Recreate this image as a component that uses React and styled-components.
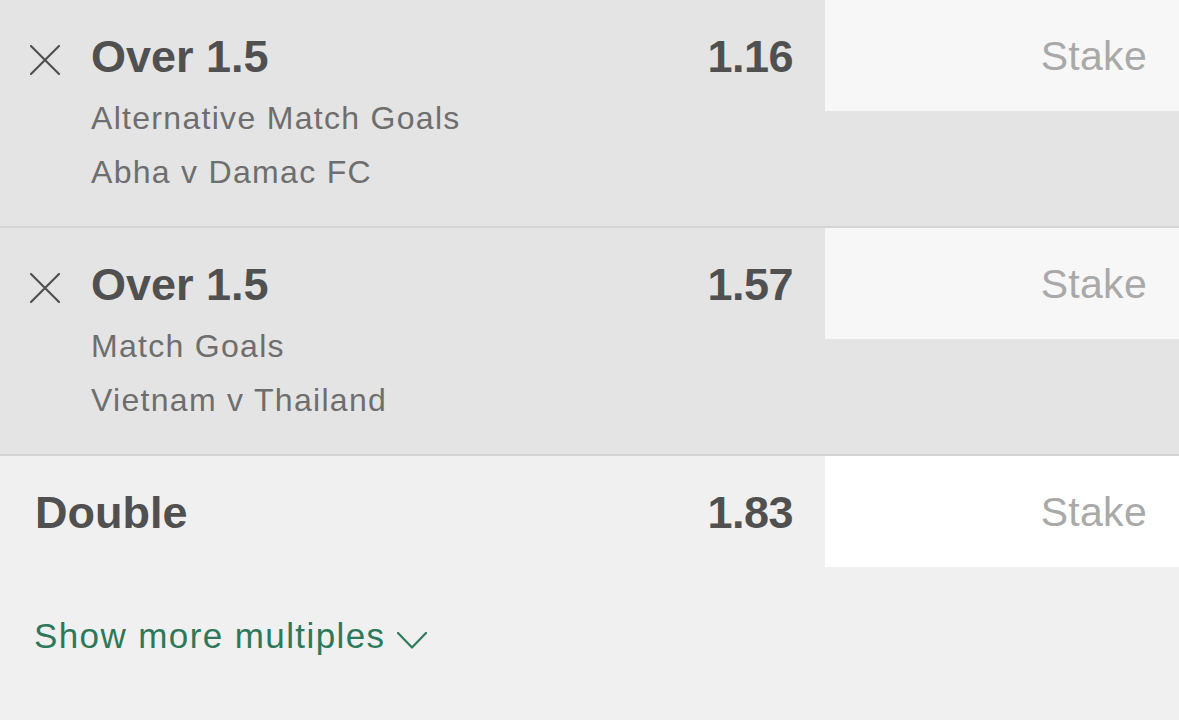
import React from 'react'
import styled, { createGlobalStyle } from 'styled-components'

const GlobalStyle = createGlobalStyle`
  html, body {
    margin: 0;
    padding: 0;
    background: #f0f0f0;
  }
  body {
    font-family: "Liberation Sans", Arial, sans-serif;
    -webkit-font-smoothing: antialiased;
  }
`

const bets = [
  { id: 1, selection: 'Over 1.5', market: 'Alternative Match Goals', event: 'Abha v Damac FC', odds: '1.16' },
  { id: 2, selection: 'Over 1.5', market: 'Match Goals', event: 'Vietnam v Thailand', odds: '1.57' },
]

function CloseIcon() {
  return (
    <svg width="30" height="30" viewBox="0 0 30 30" fill="none">
      <path d="M1 1 L29 29 M29 1 L1 29" stroke="#505050" strokeWidth="2.2" strokeLinecap="round" />
    </svg>
  )
}

function Chevron() {
  return (
    <svg width="30" height="17" viewBox="0 0 30 17" fill="none">
      <path d="M1 1 L15 15.5 L29 1" stroke="#2f7a5a" strokeWidth="2.2" strokeLinecap="round" strokeLinejoin="round" />
    </svg>
  )
}

export default function App() {
  return (
    <>
      <GlobalStyle />
      <Slip>
        {bets.map(bet => (
          <BetRow key={bet.id}>
            <CloseButton><CloseIcon /></CloseButton>
            <Details>
              <Title>{bet.selection}</Title>
              <SubLine $first>{bet.market}</SubLine>
              <SubLine>{bet.event}</SubLine>
            </Details>
            <Odds>{bet.odds}</Odds>
            <StakeBox>Stake</StakeBox>
          </BetRow>
        ))}

        <Multiples>
          <MultipleRow>
            <MultipleTitle>Double</MultipleTitle>
            <Odds>1.83</Odds>
            <StakeBox $white>Stake</StakeBox>
          </MultipleRow>
          <ShowMore>
            Show more multiples
            <Chevron />
          </ShowMore>
        </Multiples>
      </Slip>
    </>
  )
}

const Slip = styled.div`
  width: 1179px;
  height: 720px;
  display: flex;
  flex-direction: column;
  overflow: hidden;
`

const BetRow = styled.div`
  display: grid;
  grid-template-columns: 91px 1fr auto 354px;
  align-items: start;
  height: 228px;
  box-sizing: border-box;
  background: #e4e4e4;
  border-bottom: 2px solid #d5d5d5;
`

const CloseButton = styled.div`
  padding: 45px 0 0 30px;
  line-height: 0;
`

const Details = styled.div`
  padding-top: 30px;
  display: flex;
  flex-direction: column;
`

const Title = styled.div`
  font-size: 45px;
  line-height: 54px;
  font-weight: 700;
  color: #505050;
`

const SubLine = styled.div`
  font-size: 32px;
  line-height: 54px;
  letter-spacing: 1.3px;
  color: #6e6e6e;
  margin-top: ${({ $first }) => ($first ? '7px' : '0')};
`

const Odds = styled.div`
  padding: 30px 32px 0 0;
  font-size: 45px;
  line-height: 54px;
  font-weight: 700;
  letter-spacing: -0.5px;
  color: #505050;
`

const StakeBox = styled.div`
  height: 111px;
  box-sizing: border-box;
  padding: 2px 32px 0 0;
  display: flex;
  align-items: center;
  justify-content: flex-end;
  font-size: 41px;
  letter-spacing: 0.3px;
  color: #a9a9a9;
  background: ${({ $white }) => ($white ? '#ffffff' : '#f7f7f7')};
`

const Multiples = styled.div`
  flex: 1;
  background: #f0f0f0;
  display: flex;
  flex-direction: column;
`

const MultipleRow = styled.div`
  display: grid;
  grid-template-columns: 1fr auto 354px;
  align-items: start;
`

const MultipleTitle = styled.div`
  padding: 30px 0 0 35px;
  font-size: 45px;
  line-height: 54px;
  font-weight: 700;
  color: #505050;
`

const ShowMore = styled.div`
  margin-top: 42px;
  padding-left: 34px;
  display: flex;
  align-items: center;
  gap: 12px;
  font-size: 35px;
  line-height: 54px;
  letter-spacing: 1.4px;
  color: #2e7859;

  svg {
    margin-top: 8px;
  }
`
